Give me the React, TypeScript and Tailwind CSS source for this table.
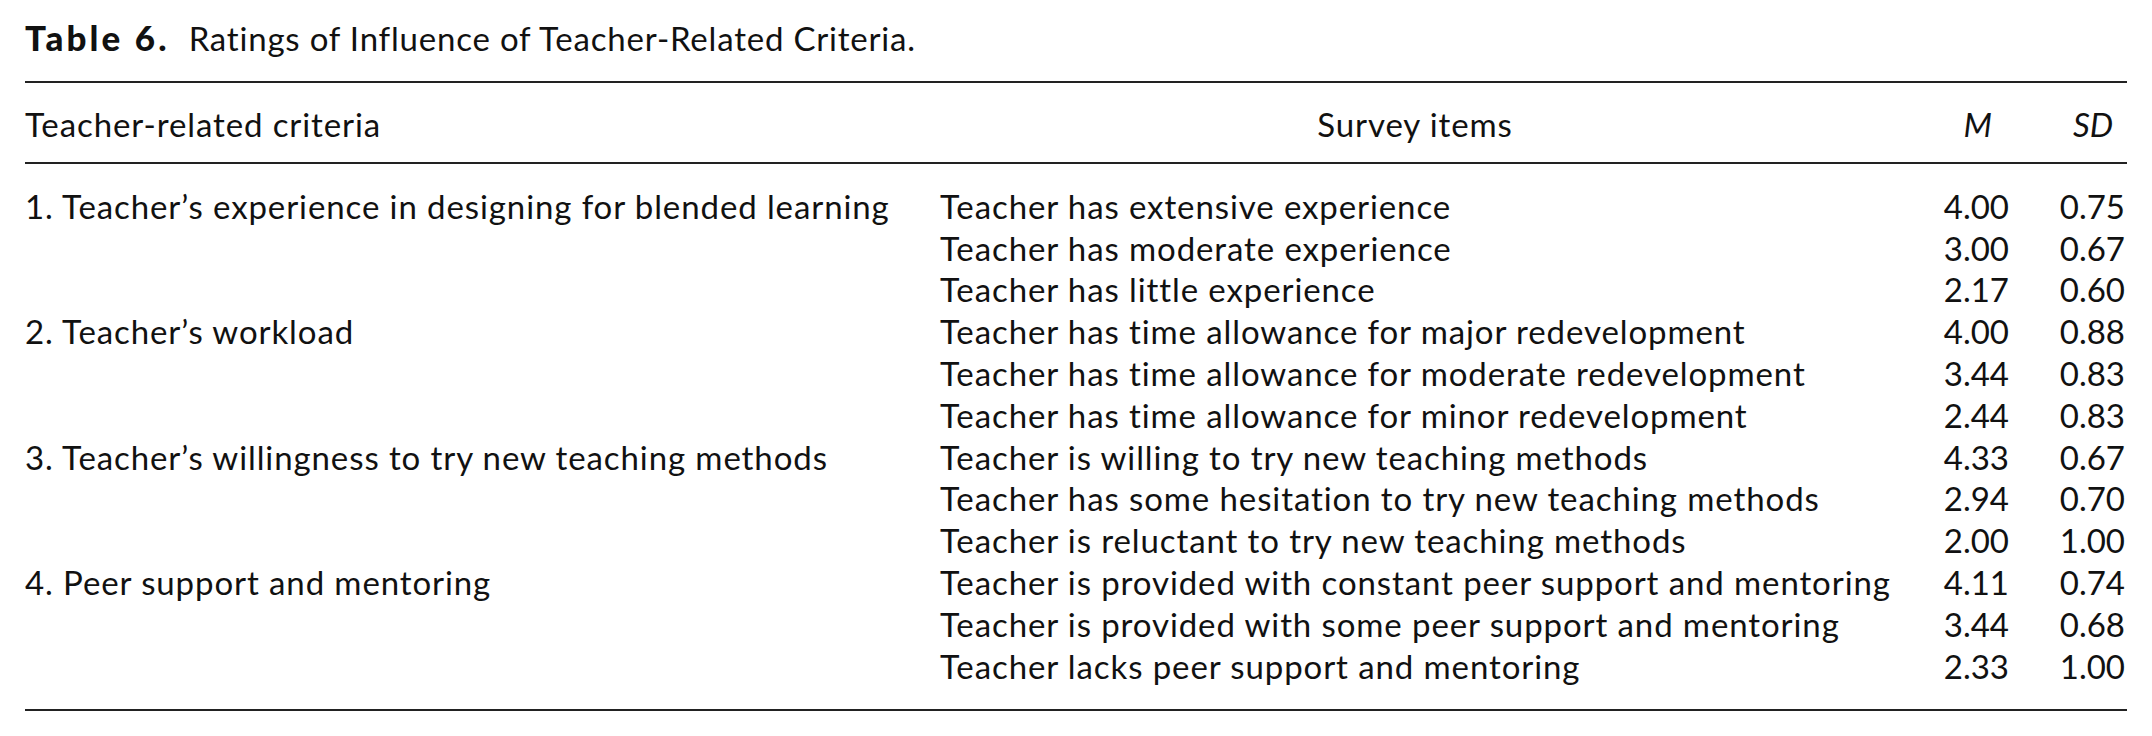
const rows = [
  { criterion: '1. Teacher’s experience in designing for blended learning', item: 'Teacher has extensive experience', m: '4.00', sd: '0.75' },
  { criterion: '', item: 'Teacher has moderate experience', m: '3.00', sd: '0.67' },
  { criterion: '', item: 'Teacher has little experience', m: '2.17', sd: '0.60' },
  { criterion: '2. Teacher’s workload', item: 'Teacher has time allowance for major redevelopment', m: '4.00', sd: '0.88' },
  { criterion: '', item: 'Teacher has time allowance for moderate redevelopment', m: '3.44', sd: '0.83' },
  { criterion: '', item: 'Teacher has time allowance for minor redevelopment', m: '2.44', sd: '0.83' },
  { criterion: '3. Teacher’s willingness to try new teaching methods', item: 'Teacher is willing to try new teaching methods', m: '4.33', sd: '0.67' },
  { criterion: '', item: 'Teacher has some hesitation to try new teaching methods', m: '2.94', sd: '0.70' },
  { criterion: '', item: 'Teacher is reluctant to try new teaching methods', m: '2.00', sd: '1.00' },
  { criterion: '4. Peer support and mentoring', item: 'Teacher is provided with constant peer support and mentoring', m: '4.11', sd: '0.74' },
  { criterion: '', item: 'Teacher is provided with some peer support and mentoring', m: '3.44', sd: '0.68' },
  { criterion: '', item: 'Teacher lacks peer support and mentoring', m: '2.33', sd: '1.00' },
];

export default function App() {
  return (
    <div className="w-[2152px] h-[736px] bg-white px-[25px] text-[#111] font-['Lato',sans-serif] text-[33px] whitespace-nowrap">
      {/* Caption */}
      <div className="pt-[16px] h-[59px] leading-[42px] flex items-baseline">
        <span className="font-black text-[35px] tracking-[3.1px]">Table 6.</span>
        <span className="ml-[19px] tracking-[0.8px]">Ratings of Influence of Teacher-Related Criteria.</span>
      </div>

      <div className="mt-[22px] h-[2px] bg-[#222]" />

      {/* Header */}
      <div className="grid grid-cols-[915px_950px_119px_118px] leading-[41.8px] pt-[21px] pb-[16px]">
        <div className="tracking-[0.9px]">Teacher-related criteria</div>
        <div className="text-center tracking-[0.9px]">Survey items</div>
        <div className="text-right italic pr-[17px]">M</div>
        <div className="text-right italic pr-[14px]">SD</div>
      </div>

      <div className="h-[2px] bg-[#222]" />

      {/* Body */}
      <div className="pt-[22px] pb-[22px] leading-[41.8px]">
        {rows.map((r, i) => (
          <div key={i} className="grid grid-cols-[915px_950px_119px_118px]">
            <div className="tracking-[0.9px]">{r.criterion}</div>
            <div className="tracking-[0.9px]">{r.item}</div>
            <div className="text-right">{r.m}</div>
            <div className="text-right pr-[2px]">{r.sd}</div>
          </div>
        ))}
      </div>

      <div className="h-[2px] bg-[#222]" />
    </div>
  );
}
